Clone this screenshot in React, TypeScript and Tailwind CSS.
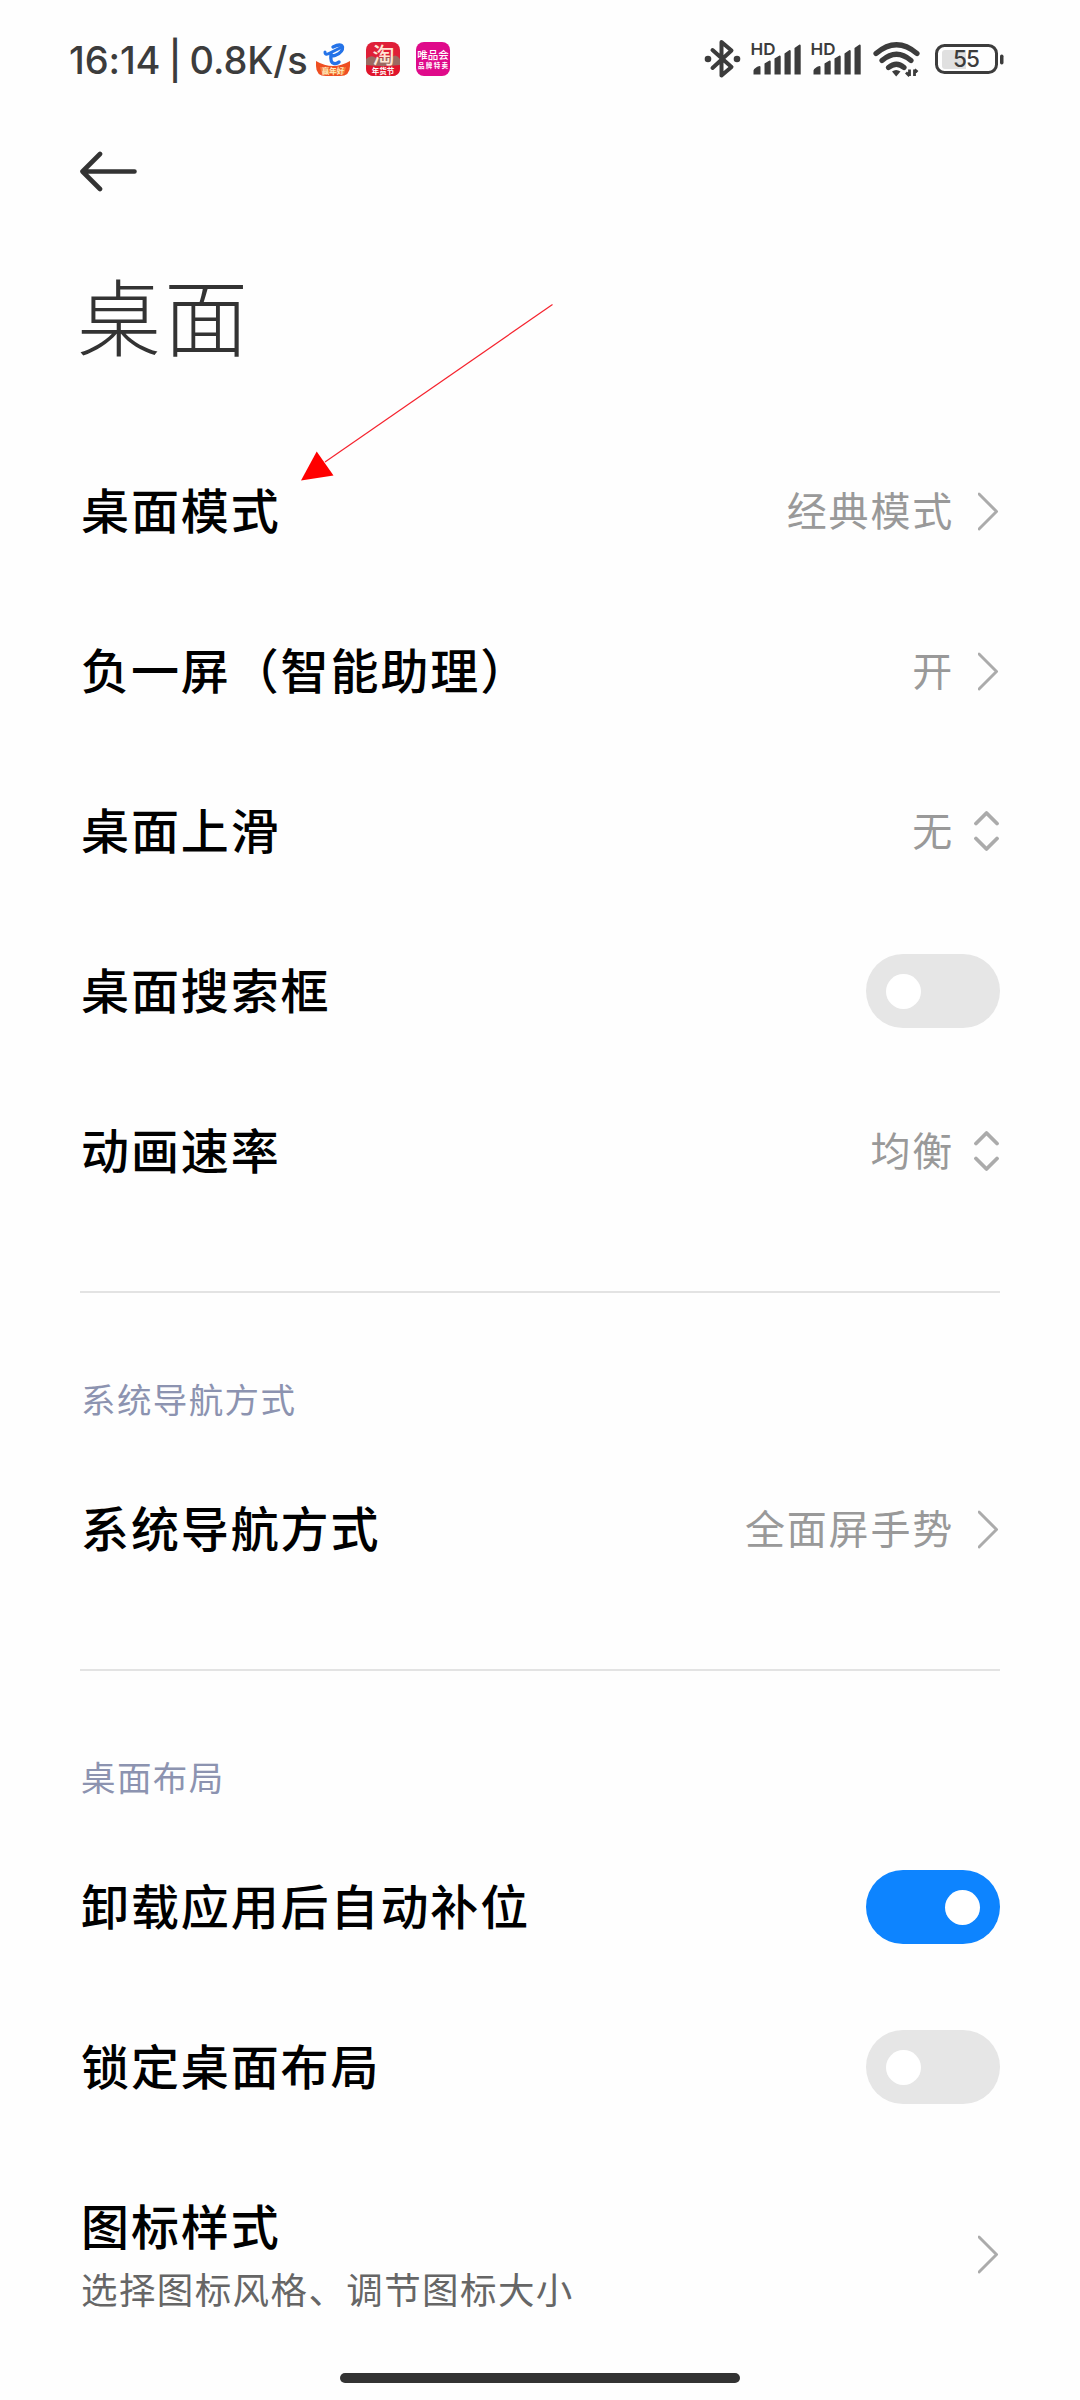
import { useState } from "react"

const FONT = "font-['Noto_Sans_CJK_SC',sans-serif]"

function ChevronRight() {
  return (
    <svg width="22" height="40" viewBox="0 0 22 40" fill="none" stroke="#ababab" strokeWidth="3" strokeLinecap="round" strokeLinejoin="round">
      <path d="M1 3L18.5 20.5L1 38" />
    </svg>
  )
}

function UpDown() {
  return (
    <svg width="26" height="42" viewBox="0 0 26 42" fill="none" stroke="#ababab" strokeWidth="3.8" strokeLinecap="round" strokeLinejoin="round">
      <path d="M2 13.5L12.5 3L23 13.5M2 28.5L12.5 39L23 28.5" />
    </svg>
  )
}

function Toggle({ initial = false }: { initial?: boolean }) {
  const [on, setOn] = useState(initial)
  return (
    <button type="button" role="switch" aria-checked={on} onClick={() => setOn(!on)}
      className={`w-[134px] h-[74px] rounded-full flex items-center px-5 ${on ? "bg-[#0d84ff] justify-end" : "bg-[#e6e6e6] justify-start"}`}>
      <span className="w-[35px] h-[35px] rounded-full bg-white" />
    </button>
  )
}

function Row({ label, value, children }: { label: string; value?: string; children: React.ReactNode }) {
  return (
    <div className="h-40 flex items-center justify-between">
      <span className="pl-px pb-[7px] text-[48px] leading-none tracking-[1.9px] font-medium text-black">{label}</span>
      <div className="flex items-center">
        {value && <span className="w-[300px] text-right pb-[5px] text-[40px] leading-none tracking-[1.8px] text-[#999999]">{value}</span>}
        <div className={value ? "w-[46px] flex justify-end" : "flex"}>{children}</div>
      </div>
    </div>
  )
}

function SectionTitle({ children }: { children: string }) {
  return (
    <div className="mt-[60px] border-t-2 border-[#e3e3e3] h-[158px] pt-[88px]">
      <h2 className="pl-px text-[34.5px] leading-[34px] tracking-[1.4px] text-[#8c93b0]">{children}</h2>
    </div>
  )
}

function Signal() {
  return (
    <svg width="50" height="34" viewBox="0 0 50 34" fill="#3c3c3c" className="overflow-visible">
      <text x="-1.5" y="13" fontSize="16.5" fontWeight="600" fontFamily="Inter, sans-serif" textLength="25" lengthAdjust="spacingAndGlyphs">HD</text>
      <path d="M1.5 32.5v-4q1-3 6-4.5q1 0 1 1v7.5zM12.5 32.5v-11l5-3q1.2 0 1.2 1v13zM22.5 32.5v-16l5-3q1.2 0 1.2 1v18zM32.5 32.5v-21l5-3.5q1.2 0 1.2 1v23.5zM42.5 32.5v-26.5l5-3.5q1.2 0 1.2 1v29z" />
    </svg>
  )
}

function StatusBar() {
  return (
    <div className="h-[120px] pl-[69px] pr-[75px] flex items-start pt-[39px] text-[#3c3c3c]">
      <span className="w-[247px] text-[38px] leading-[42px] font-medium tracking-[-0.1px] [word-spacing:-2px] whitespace-pre font-['Inter',sans-serif]">16:14 | 0.8K/s</span>
      <div className="flex gap-4 pt-[3px]">
        <svg width="34" height="34" viewBox="0 0 34 34" className="overflow-visible">
          <path d="M0 19Q17 29 34 19V24Q34 34 24 34H10Q0 34 0 24Z" fill="#ee4f22" />
          <path d="M4 25Q17 30 30 25L28 32H6Z" fill="#f4813e" />
          <path d="M9 10Q9 14 14 11L24 6" fill="none" stroke="#2473e8" strokeWidth="3" strokeLinecap="round" />
          <path d="M17 5Q25 1 26.5 5Q27 10 20 13Q16 15 15 12Q14 21 18 21.5Q21 22 23 20" fill="none" stroke="#2473e8" strokeWidth="3.4" strokeLinecap="round" strokeLinejoin="round" />
          <text x="17" y="31.5" fontSize="7.5" fontWeight="700" fill="#ffe9b8" textAnchor="middle" fontFamily="Noto Sans CJK SC, sans-serif">赢年好</text>
        </svg>
        <svg width="34" height="34" viewBox="0 0 34 34" className="overflow-visible">
          <rect width="34" height="34" rx="8" fill="#df1f38" />
          <path d="M0 17Q5 12 10 16L26 15Q30 11 34 17V24H0Z" fill="#9b6a62" />
          <text x="17.5" y="21" fontSize="22" fontWeight="500" fill="#ffe6d5" textAnchor="middle" fontFamily="Noto Sans CJK SC, sans-serif">淘</text>
          <path d="M0 23Q17 25 34 23V26Q34 34 26 34H8Q0 34 0 26Z" fill="#e0142c" />
          <text x="17" y="31.5" fontSize="7.5" fontWeight="700" fill="#fff" textAnchor="middle" fontFamily="Noto Sans CJK SC, sans-serif">年货节</text>
        </svg>
        <svg width="34" height="34" viewBox="0 0 34 34" fill="#fff" fontFamily="Noto Sans CJK SC, sans-serif">
          <rect width="34" height="34" rx="8" fill="#df0a8a" />
          <text x="17" y="17" fontSize="10.5" fontWeight="500" textAnchor="middle">唯品会</text>
          <text x="17" y="25.5" fontSize="6.5" fontWeight="700" textAnchor="middle" textLength="30">品牌特卖</text>
        </svg>
      </div>
      <div className="ml-auto flex">
        <svg width="37" height="40" viewBox="0 0 37 40" className="mr-[11px]">
          <path d="M8.5 11L27.5 28L17.5 36.5V3L27.5 11.5L8.5 29" fill="none" stroke="#3c3c3c" strokeWidth="4" strokeLinecap="round" strokeLinejoin="round" />
          <circle cx="4" cy="20" r="3.3" fill="#3c3c3c" />
          <circle cx="33" cy="20" r="3.3" fill="#3c3c3c" />
        </svg>
        <div className="flex gap-[10px] pt-[3px]">
          <Signal />
          <Signal />
        </div>
        <svg width="48" height="36" viewBox="0 0 48 36" className="mt-[2px] ml-[11px]" fill="none" stroke="#3c3c3c" strokeWidth="5.2" strokeLinecap="round">
          <path d="M3 12.5Q23.5 -5 44 12.5M9 19.5Q23.5 7 38 19.5M15.5 26.5Q23.5 20 31 26.5" />
          <path d="M19 30.5Q23 27.5 27.5 30.5L23.2 35.5Z" fill="#3c3c3c" stroke="none" />
          <path d="M36.5 28.5V35M36.5 35L33 31.5M41.5 35V28.5M41.5 28.5L44.5 31" strokeWidth="2.8" strokeLinecap="butt" />
        </svg>
        <svg width="70" height="32" viewBox="0 0 70 32" className="mt-[4px] ml-[14px]">
          <rect x="1.5" y="2.5" width="60" height="27" rx="8" fill="none" stroke="#3c3c3c" strokeWidth="3" />
          <path d="M7 10Q7 7 10 7H31V26H10Q7 26 7 23Z" fill="#e0e0e0" />
          <rect x="65" y="11.5" width="3.5" height="10" rx="1.7" fill="#3c3c3c" />
          <text x="31.5" y="24" fontSize="22.5" fontWeight="500" fill="#3c3c3c" textAnchor="middle" fontFamily="Inter, sans-serif" textLength="27">55</text>
        </svg>
      </div>
    </div>
  )
}

export default function App() {
  return (
    <div className={`relative w-[1080px] h-[2400px] overflow-hidden bg-[#fefefe] flex flex-col ${FONT}`} lang="zh-CN">
      <StatusBar />

      <main className="px-20">
        <button type="button" aria-label="返回" className="h-[102px] flex items-center">
          <svg width="58" height="42" viewBox="0 0 58 42" fill="none" stroke="#333333" strokeWidth="4.6" strokeLinecap="round" strokeLinejoin="round">
            <path d="M54.5 21.5H4M20 4L2.5 21.5L20 39" />
          </svg>
        </button>
        <h1 className="h-[209px] pt-[50px] -ml-[3px] text-[84px] leading-[84px] tracking-[3px] font-light text-[#333333]">桌面</h1>

        <Row label="桌面模式" value="经典模式"><ChevronRight /></Row>
        <Row label="负一屏（智能助理）" value="开"><ChevronRight /></Row>
        <Row label="桌面上滑" value="无"><UpDown /></Row>
        <Row label="桌面搜索框"><Toggle /></Row>
        <Row label="动画速率" value="均衡"><UpDown /></Row>

        <SectionTitle>系统导航方式</SectionTitle>
        <Row label="系统导航方式" value="全面屏手势"><ChevronRight /></Row>

        <SectionTitle>桌面布局</SectionTitle>
        <Row label="卸载应用后自动补位"><Toggle initial /></Row>
        <Row label="锁定桌面布局"><Toggle /></Row>
        <div className="h-[213px] flex items-center justify-between">
          <div className="flex flex-col gap-[23px] pl-px">
            <span className="text-[48px] leading-none tracking-[1.9px] font-medium text-black">图标样式</span>
            <span className="text-[36.5px] leading-none tracking-[1.4px] text-[#666666]">选择图标风格、调节图标大小</span>
          </div>
          <ChevronRight />
        </div>
      </main>

      <div className="w-[400px] h-[10px] mt-[13px] mx-auto rounded-full bg-[#333333]" />

      {/* red pointer over the list */}
      <svg width="256" height="180" viewBox="0 0 256 180" className="absolute left-[300px] top-[302px] pointer-events-none">
        <path d="M252.5 2.5L25 160" stroke="#f5222d" strokeWidth="1.2" />
        <path d="M1 178.5L16.7 149.5L33.5 173.5Z" fill="#ff0000" />
      </svg>
    </div>
  )
}
